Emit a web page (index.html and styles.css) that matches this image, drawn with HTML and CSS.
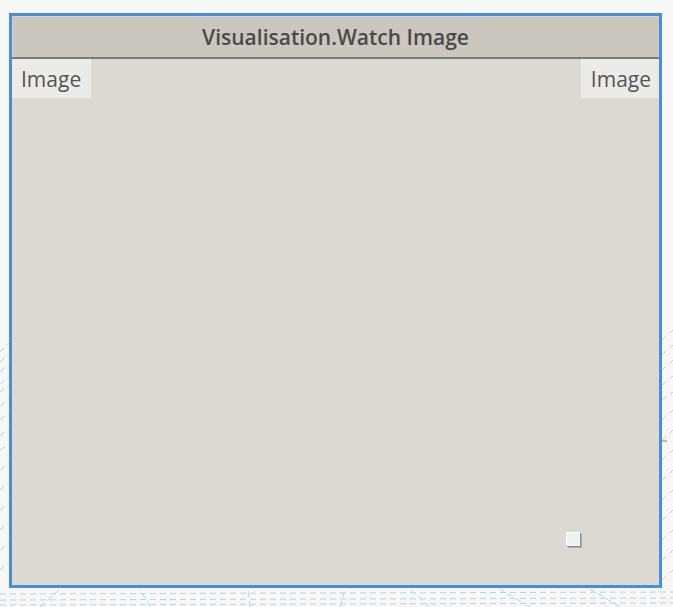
FILE: index.html
```html
<!DOCTYPE html>
<html>
<head>
<meta charset="utf-8">
<link rel="stylesheet" href="styles.css">
</head>
<body>
<div class="canvas">
  <svg class="grid" width="673" height="607" viewBox="0 0 673 607">
    <g stroke="#b9d3e6" stroke-width="1" stroke-dasharray="6 4" fill="none">
      <line x1="0" y1="594" x2="673" y2="592"/>
      <line x1="0" y1="600" x2="673" y2="598"/>
      <line x1="0" y1="605" x2="673" y2="603"/>
      <line x1="0" y1="352" x2="12" y2="340"/>
      <line x1="0" y1="362" x2="12" y2="352"/>
      <line x1="0" y1="372" x2="12" y2="362"/>
      <line x1="0" y1="384" x2="12" y2="374"/>
      <line x1="0" y1="392" x2="12" y2="382"/>
      <line x1="0" y1="406" x2="12" y2="396"/>
      <line x1="0" y1="420" x2="12" y2="410"/>
      <line x1="0" y1="436" x2="12" y2="426"/>
      <line x1="0" y1="450" x2="12" y2="442"/>
      <line x1="0" y1="470" x2="12" y2="460"/>
      <line x1="0" y1="490" x2="12" y2="480"/>
      <line x1="0" y1="510" x2="12" y2="500"/>
      <line x1="0" y1="530" x2="12" y2="520"/>
      <line x1="0" y1="550" x2="12" y2="540"/>
      <line x1="0" y1="570" x2="12" y2="560"/>
      <line x1="662" y1="340" x2="673" y2="330"/>
      <line x1="662" y1="355" x2="673" y2="345"/>
      <line x1="662" y1="370" x2="673" y2="360"/>
      <line x1="662" y1="385" x2="673" y2="376"/>
      <line x1="662" y1="400" x2="673" y2="392"/>
      <line x1="662" y1="420" x2="673" y2="410"/>
      <line x1="662" y1="440" x2="673" y2="430"/>
      <line x1="662" y1="460" x2="673" y2="450"/>
      <line x1="662" y1="480" x2="673" y2="470"/>
      <line x1="662" y1="500" x2="673" y2="490"/>
      <line x1="662" y1="520" x2="673" y2="510"/>
      <line x1="662" y1="540" x2="673" y2="530"/>
      <line x1="662" y1="560" x2="673" y2="550"/>
      <line x1="662" y1="580" x2="673" y2="570"/>
      <line x1="40" y1="607" x2="60" y2="589"/>
      <line x1="150" y1="607" x2="140" y2="589"/>
      <line x1="250" y1="607" x2="248" y2="589"/>
      <line x1="340" y1="607" x2="345" y2="589"/>
      <line x1="430" y1="607" x2="410" y2="589"/>
      <line x1="530" y1="607" x2="500" y2="589"/>
      <line x1="620" y1="607" x2="590" y2="589"/>
    </g>
    <line x1="662" y1="441" x2="667" y2="441" stroke="#e05050" stroke-width="1"/>
  </svg>
  <div class="node">
    <div class="node-header">Visualisation.Watch Image</div>
    <div class="node-body">
      <div class="ports">
        <div class="port">Image</div>
        <div class="port">Image</div>
      </div>
      <div class="node-footer">
        <div class="handle"></div>
      </div>
    </div>
  </div>
</div>
</body>
</html>
```
FILE: styles.css
```css
html, body {
  margin: 0;
  padding: 0;
  background: #f7f7f7;
}
.canvas {
  position: relative;
  width: 673px;
  height: 607px;
  overflow: hidden;
  padding-top: 13px;
  padding-left: 9px;
  box-sizing: border-box;
}
.grid {
  position: absolute;
  left: 0;
  top: 0;
}
.node {
  position: relative;
  width: 653px;
  height: 575px;
  box-sizing: border-box;
  border: 3px solid #4590d8;
  background: #dcd9d3;
  display: flex;
  flex-direction: column;
  font-family: "Open Sans", "Noto Sans", sans-serif;
  color: #4f4f4f;
}
.node-header {
  height: 41px;
  background: #cbc6be;
  border-bottom: 2px solid #7d7b78;
  display: flex;
  align-items: center;
  justify-content: center;
  font-size: 21px;
  font-weight: 600;
  color: #4a4a4a;
  box-shadow: inset 1px 1px 0 #d6d2cb;
}
.node-body {
  flex: 1;
  display: flex;
  flex-direction: column;
  justify-content: space-between;
}
.ports {
  display: flex;
  justify-content: space-between;
}
.port {
  height: 39px;
  background: #ecebe8;
  display: flex;
  align-items: center;
  font-size: 21px;
  padding: 1px 10px 0 9px;
  box-sizing: border-box;
  color: #555;
}
.ports .port:last-child {
  padding: 1px 8px 0 10px;
}
.node-footer {
  display: flex;
  justify-content: flex-end;
  padding: 0 79px 39px 0;
}
.handle {
  width: 12px;
  height: 12px;
  background: #f0f0f0;
  border: 1px solid #ffffff;
  box-shadow: 1px 1px 0 #8a8a8a, 2px 2px 0 #b0b0b0;
}
```
